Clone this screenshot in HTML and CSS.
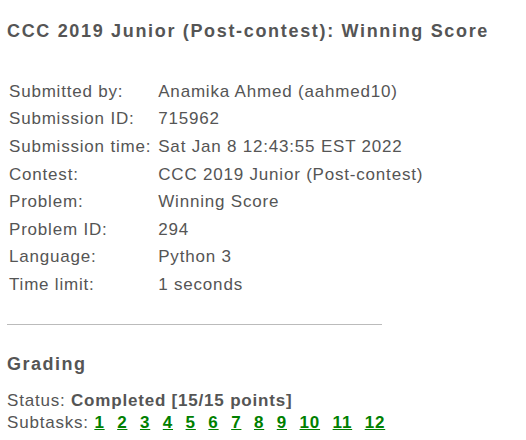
FILE: index.html
```html
<!DOCTYPE html>
<html lang="en">
<head>
    <meta charset="UTF-8">
    <meta name="viewport" content="width=device-width, initial-scale=1.0">
    <title>Submission</title>
    <link rel="stylesheet" href="styles.css">
</head>
<body>
    <!-- Submission details -->
    <div class="submission-container">
        <h2>CCC 2019 Junior (Post-contest): Winning Score</h2>

        <table class="info-table">
            <tr><td class="label">Submitted by:</td><td>Anamika Ahmed (aahmed10)</td></tr>
            <tr><td class="label">Submission ID:</td><td>715962</td></tr>
            <tr><td class="label">Submission time:</td><td>Sat Jan 8 12:43:55 EST 2022</td></tr>
            <tr><td class="label">Contest:</td><td>CCC 2019 Junior (Post-contest)</td></tr>
            <tr><td class="label">Problem:</td><td>Winning Score</td></tr>
            <tr><td class="label">Problem ID:</td><td>294</td></tr>
            <tr><td class="label">Language:</td><td>Python 3</td></tr>
            <tr><td class="label">Time limit:</td><td>1 seconds</td></tr>
        </table>

        <hr>

        <!-- Grading -->
        <h3>Grading</h3>
        <div class="status">Status: <b>Completed [15/15 points]</b></div>
        <div class="subtasks">Subtasks:
            <a href="#">1</a>
            <a href="#">2</a>
            <a href="#">3</a>
            <a href="#">4</a>
            <a href="#">5</a>
            <a href="#">6</a>
            <a href="#">7</a>
            <a href="#">8</a>
            <a href="#">9</a>
            <a href="#">10</a>
            <a href="#">11</a>
            <a href="#">12</a>
        </div>
    </div>
</body>
</html>
```

FILE: styles.css
```css
/* CSS Styles */
body {
    margin: 0;
    padding: 0 7px;
    font-family: 'Liberation Sans', Arial, sans-serif;
    color: #555;
    background: #fff;
}

h2 {
    margin: 20px 0 36px;
    font-size: 18px;
    line-height: 22px;
    letter-spacing: 1.67px;
    color: #555;
}

.info-table {
    border-collapse: separate;
    border-spacing: 0;
    font-size: 17px;
    letter-spacing: 0.8px;
}

.info-table td {
    padding: 0 2px;
    height: 27.6px;
}

.info-table .label {
    padding-right: 5px;
}

hr {
    width: 375px;
    margin: 25px 0 27px;
    border: none;
    border-top: 1px solid #bbb;
}

h3 {
    margin: 0 0 14px;
    font-size: 18px;
    line-height: 24px;
    letter-spacing: 1.5px;
}

.status, .subtasks {
    font-size: 17px;
    line-height: 22px;
    letter-spacing: 0.8px;
}

.subtasks a {
    color: #008000;
    font-weight: bold;
    margin-right: 7px;
}
```
